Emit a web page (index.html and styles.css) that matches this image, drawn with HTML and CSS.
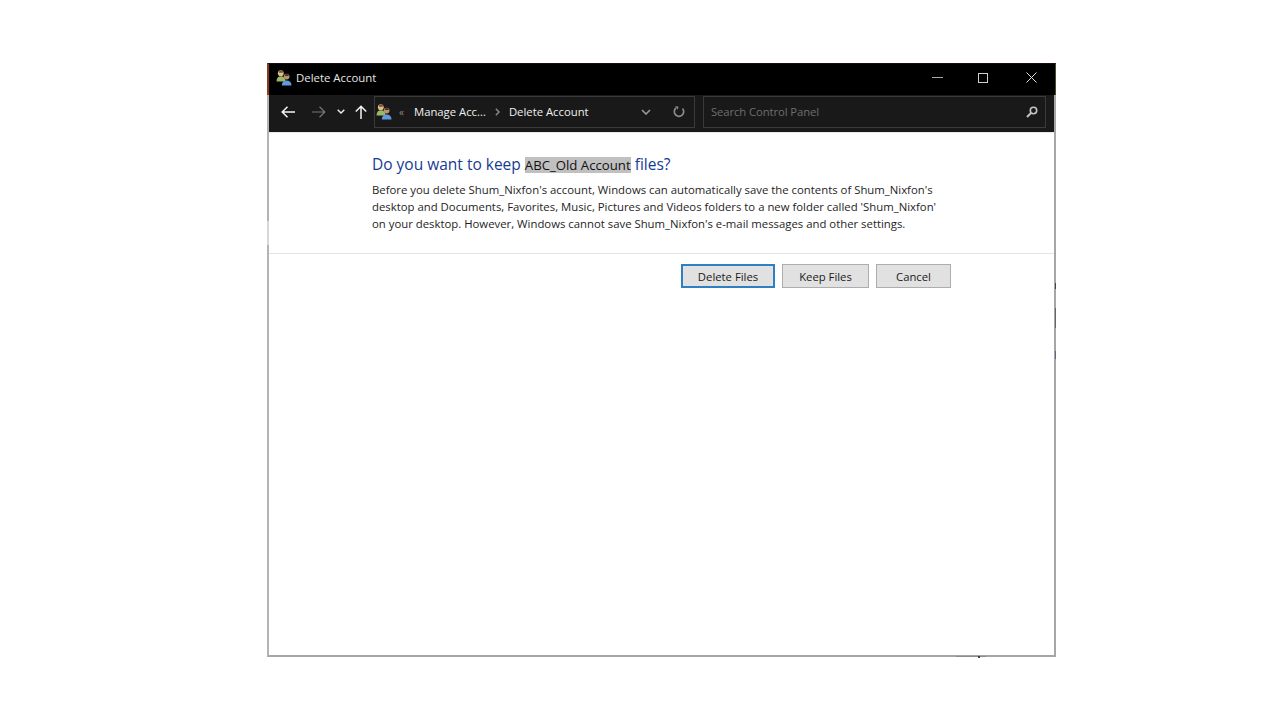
FILE: index.html
```html
<!DOCTYPE html>
<html lang="en">
<head>
<meta charset="utf-8">
<title>Delete Account</title>
<link rel="stylesheet" href="styles.css">
</head>
<body>
<div class="window">
  <header class="titlebar">
    <svg class="app-icon" viewBox="0 0 16 16"><circle cx="4.800" cy="3.200" r="2.900" fill="#e0bd85"/><path d="M3 1.500c1-1.200 3-1.200 4 0l-.3 1.300H3z" fill="#6b5236"/><path d="M.5 11.500c0-3.500 1.800-5.200 4.300-5.200S9.500 8 9.500 11.500z" fill="#9bb86a"/><circle cx="10.600" cy="6.600" r="2.900" fill="#b9946a"/><path d="M8.800 5c1-1.200 3-1.200 4 0l-.3 1H9z" fill="#3d3228"/><path d="M5.800 15.500c0-3.300 2-5 4.800-5s4.900 1.700 4.900 5z" fill="#5f9bdc"/></svg>
    <span class="title">Delete Account</span>
    <div class="controls">
      <svg class="ctl ctl-min" viewBox="0 0 11 11"><path d="M0 5.500h11" stroke="#a8a8a8" stroke-width="1"/></svg>
      <svg class="ctl ctl-max" viewBox="0 0 10 10"><rect x=".5" y=".5" width="9" height="9" fill="none" stroke="#d0d0d0"/></svg>
      <svg class="ctl ctl-close" viewBox="0 0 11 11"><path d="M.5.500l10 10M10.500.500l-10 10" stroke="#e0e0e0" stroke-width="1"/></svg>
    </div>
  </header>
  <nav class="navbar">
    <svg class="nav-arrow back" viewBox="0 0 14 12"><path d="M1 6h13M6.500.8L1.200 6l5.300 5.200" fill="none" stroke="#f4f4f4" stroke-width="1.500"/></svg>
    <svg class="nav-arrow forward" viewBox="0 0 14 12"><path d="M0 6h13M7.500.8L12.800 6l-5.300 5.200" fill="none" stroke="#777" stroke-width="1.200"/></svg>
    <svg class="nav-drop" viewBox="0 0 8 5"><path d="M.7.700L4 4l3.300-3.300" fill="none" stroke="#efefef" stroke-width="1.400"/></svg>
    <svg class="nav-up" viewBox="0 0 12 14"><path d="M6 14V1.200M.8 6.500L6 1.200l5.200 5.300" fill="none" stroke="#f4f4f4" stroke-width="1.500"/></svg>
    <div class="address">
      <svg class="addr-icon" viewBox="0 0 16 16"><circle cx="4.800" cy="3.200" r="2.900" fill="#e0bd85"/><path d="M3 1.500c1-1.200 3-1.200 4 0l-.3 1.300H3z" fill="#6b5236"/><path d="M.5 11.500c0-3.500 1.800-5.200 4.300-5.200S9.500 8 9.500 11.500z" fill="#9bb86a"/><circle cx="10.600" cy="6.600" r="2.900" fill="#b9946a"/><path d="M8.800 5c1-1.200 3-1.200 4 0l-.3 1H9z" fill="#3d3228"/><path d="M5.800 15.500c0-3.300 2-5 4.800-5s4.900 1.700 4.900 5z" fill="#5f9bdc"/></svg>
      <span class="crumb-more">«</span>
      <span class="crumb">Manage Acc...</span>
      <svg class="crumb-sep" viewBox="0 0 5 8"><path d="M.8.800L4 4 .8 7.200" fill="none" stroke="#8a8a8a" stroke-width="1.500"/></svg>
      <span class="crumb">Delete Account</span>
      <svg class="addr-drop" viewBox="0 0 10 6"><path d="M1 1l4 4 4-4" fill="none" stroke="#9a9a9a" stroke-width="1.600"/></svg>
      <svg class="addr-refresh" viewBox="0 0 12 12"><path d="M9.500 2.500A4.700 4.700 0 1 1 3 2" fill="none" stroke="#8c8c8c" stroke-width="1.700"/><path d="M2 .2l3.400.4-.4 3.200z" fill="#8c8c8c"/></svg>
    </div>
    <div class="search">
      <span class="search-text">Search Control Panel</span>
      <svg class="search-icon" viewBox="0 0 12 12"><circle cx="7.500" cy="4.500" r="3.200" fill="none" stroke="#c4c4c4" stroke-width="1.600"/><path d="M5 7L1 11" stroke="#c4c4c4" stroke-width="2"/></svg>
    </div>
  </nav>
  <main class="content">
    <section class="message">
      <h1 class="heading">Do you want to keep <span class="highlight">ABC_Old Account</span> files?</h1>
      <p class="body-text">Before you delete Shum_Nixfon's account, Windows can automatically save the contents of Shum_Nixfon's<br>desktop and Documents, Favorites, Music, Pictures and Videos folders to a new folder called 'Shum_Nixfon'<br>on your desktop. However, Windows cannot save Shum_Nixfon's e-mail messages and other settings.</p>
    </section>
    <div class="actions">
      <button class="btn btn-delete">Delete Files</button>
      <button class="btn btn-keep">Keep Files</button>
      <button class="btn btn-cancel">Cancel</button>
    </div>
  </main>
  <span class="peek peek-bottom"></span>
  <span class="peek peek-tick"></span>
  <span class="peek peek-r1"></span>
  <span class="peek peek-r2"></span>
  <span class="peek peek-r3"></span>
  <span class="peek peek-left"></span>
</div>
</body>
</html>
```
FILE: styles.css
```css
* { box-sizing: border-box; }
html, body { margin: 0; height: 100%; background: #fff; }
body {
  padding: 63px 0 0 267px;
  font-family: "Open Sans", "Liberation Sans", sans-serif;
  overflow: hidden;
}
.window {
  position: relative;
  width: 789px;
  height: 594px;
  display: flex;
  flex-direction: column;
  border-right: 2px solid #a6a6a6;
  border-bottom: 2px solid #a6a6a6;
  border-left: 2px solid #b4b4b4;
  background: #fff;
}
.titlebar {
  height: 32px;
  margin: 0 -2px;
  background: #000;
  color: #e6e6e6;
  display: flex;
  align-items: center;
  padding: 0 0 4px 7px;
  flex: none;
  border-left: 2px solid #8a3a1e;
  border-right: 1px solid #4a4a20;
  border-top: 1px solid #1a0c08;
}
.app-icon { width: 16px; height: 16px; }
.title { font-size: 11.400px; margin-left: 4px; }
.controls { margin-left: auto; display: flex; align-items: center; height: 100%; }
.ctl { display: block; width: 11px; height: 11px; }
.ctl-min { margin-right: 35px; }
.ctl-max { margin-right: 38px; width: 10px; height: 10px; }
.ctl-close { margin-right: 18px; }
.navbar {
  height: 37px;
  background: #191919;
  flex: none;
  display: flex;
  align-items: center;
  padding: 0 8px 4px 13px;
}
.nav-arrow { width: 14px; height: 12px; display: block; }
.back { margin-left: -1px; }
.forward { margin-left: 17px; }
.nav-drop { width: 8px; height: 5px; margin-left: 11px; display: block; }
.nav-up { width: 12px; height: 14px; margin-left: 10px; display: block; }
.address {
  margin-left: 7px;
  width: 321px;
  height: 32px;
  border: 1px solid #3a3a3a;
  display: flex;
  align-items: center;
  color: #f0f0f0;
  font-size: 11.300px;
}
.addr-icon { width: 16px; height: 16px; margin-left: 1px; }
.crumb-more { color: #8a8a8a; font-size: 10px; margin-left: 7px; }
.crumb { white-space: nowrap; }
.crumb-more + .crumb { margin-left: 10px; }
.crumb-sep { width: 5px; height: 8px; margin: 0 9px; }
.addr-drop { width: 10px; height: 6px; margin-left: auto; }
.addr-refresh { width: 12px; height: 12px; margin-left: 22px; margin-right: 9px; }
.search {
  margin-left: 8px;
  width: 343px;
  height: 32px;
  border: 1px solid #3a3a3a;
  display: flex;
  align-items: center;
  padding: 0 8px 0 7px;
  font-size: 11.300px;
  letter-spacing: -.1px;
  color: #6e6e6e;
}
.search-icon { width: 12px; height: 12px; margin-left: auto; margin-right: -1px; }
.content { flex: 1; display: flex; flex-direction: column; }
.message {
  padding: 20px 0 20px 103px;
  border-bottom: 1px solid #e3e3e3;
  border-top: 1px solid #e8e8e8;
}
.heading {
  margin: 0 0 7px;
  font-size: 15.500px;
  font-weight: 400;
  line-height: 22px;
  color: #153b94;
  white-space: nowrap;
}
.highlight {
  background: #c0c0c0;
  color: #111;
  font-size: 13.200px;
  display: inline-block;
  line-height: 16px;
}
.body-text {
  margin: -1px 0 1px;
  font-size: 11.350px;
  line-height: 17px;
  color: #1e1e1e;
  white-space: nowrap;
}
.actions {
  display: flex;
  padding: 10px 0 0 412px;
  gap: 7px;
}
.btn {
  height: 24px;
  background: #e1e1e1;
  border: 1px solid #adadad;
  font: inherit;
  font-size: 11.300px;
  color: #1a1a1a;
  padding: 0;
}
.btn-delete { width: 94px; border: 2px solid #2f7fc1; }
.btn-keep { width: 87px; }
.btn-cancel { width: 75px; }
.peek { position: absolute; display: block; }
.peek-bottom { left: 687px; bottom: -2px; width: 30px; height: 1px; background: #8c8c8c; }
.peek-tick { left: 709px; bottom: -3px; width: 2px; height: 2px; background: #444; }
.peek-r1 { right: -2px; top: 220px; width: 1px; height: 6px; background: #444; }
.peek-r2 { right: -2px; top: 245px; width: 1px; height: 20px; background: #666; }
.peek-r3 { right: -2px; top: 288px; width: 1px; height: 8px; background: #5a6a80; }
.peek-left { left: -2px; top: 158px; width: 2px; height: 24px; background: #d8d8d8; }
```
